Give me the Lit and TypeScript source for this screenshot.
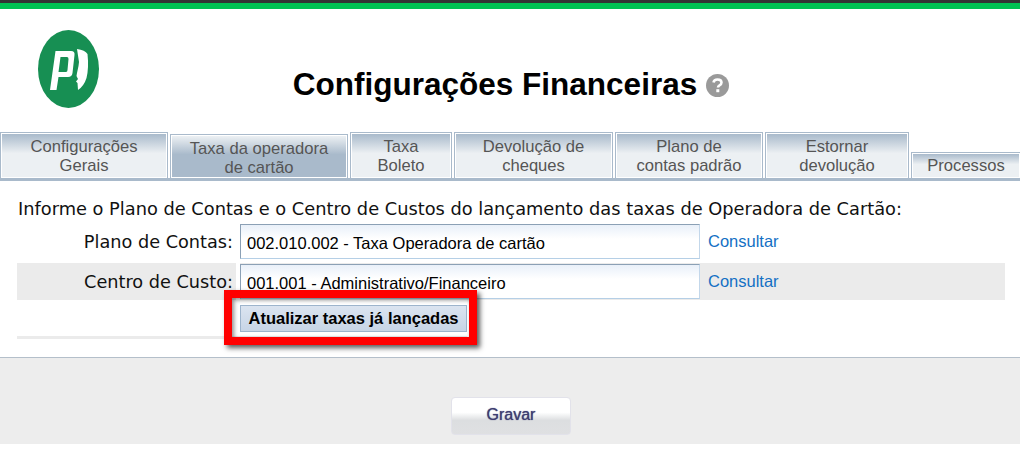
import { LitElement, html, css } from "lit";
import { customElement } from "lit/decorators.js";

const TABS = [
  { label: ["Configurações", "Gerais"], w: 168 },
  { label: ["Taxa da operadora", "de cartão"], w: 178, active: true },
  { label: ["Taxa", "Boleto"], w: 102 },
  { label: ["Devolução de", "cheques"], w: 159 },
  { label: ["Plano de", "contas padrão"], w: 148 },
  { label: ["Estornar", "devolução"], w: 144 },
  { label: ["Processos"], w: 110, short: true },
];

@customElement("app-root")
export class AppRoot extends LitElement {
  static styles = css`
    :host { display: block; width: 1020px; height: 451px; background: #fff; overflow: hidden; font-family: "Liberation Sans", Arial, sans-serif; }
    .top { height: 3px; background: #333; }
    .green { height: 6px; background: #00c152; }
    .header { height: 123px; display: grid; grid-template-columns: 1fr auto 1fr; align-items: start; }
    .logo { margin: 21px 0 0 38px; display: block; }
    .title { display: flex; align-items: center; gap: 9px; margin-top: 57px; padding-left: 2px; }
    h1 { margin: 0; font-size: 31.5px; line-height: 36px; font-weight: 700; color: #000; }
    .help { display: block; margin-top: 2px; }
    .tabs { display: flex; align-items: flex-end; gap: 2px; height: 46px; border-bottom: 3px solid #a9bacb; overflow: hidden; }
    .tab { flex: none; box-sizing: border-box; height: 46px; border: 1px solid #a9bacb; border-bottom: none; padding: 1px; text-align: center; }
    .tab-in { height: 100%; box-sizing: border-box; background: linear-gradient(#a9bacb 0, #ecf0f3 45%, #ecf0f3 100%); color: #555; font-size: 16.6px; line-height: 19px; padding-top: 3px; }
    .tab.active { height: 44px; }
    .tab.active .tab-in { background: linear-gradient(#ecf0f3 0, #a9bacb 45%, #a9bacb 100%); padding-top: 3px; }
    .tab.short { height: 26px; }
    .tab.short .tab-in { padding-top: 2px; }
    .form { margin: 0 15px 0 17px; padding-top: 14px; }
    .intro { font-family: "DejaVu Sans", sans-serif; font-size: 17.8px; line-height: 28px; color: #111; height: 29px; margin-left: 1px; white-space: nowrap; }
    .row { display: grid; grid-template-columns: 219px 460px 1fr; align-items: start; height: 36px; margin-bottom: 3px; column-gap: 4px; }
    .row.alt { height: 37px; padding-top: 1px; box-sizing: border-box; margin-bottom: 4px; background: linear-gradient(to right, #ebebeb 219px, #fff 219px, #fff 223px, #ebebeb 223px); }
    .row label { text-align: right; font-family: "DejaVu Sans", sans-serif; font-size: 17.7px; line-height: 36px; color: #111; padding-right: 3px; white-space: nowrap; }
    .input { box-sizing: border-box; height: 35px; border: 1px solid #8ba0b5; border-bottom-color: #b5cfe6; border-right-color: #c3d7ea; background: linear-gradient(#e9f0f9 0, #fff 14px); padding: 8px 0 0 6px; font-size: 16.5px; line-height: 20px; color: #000; white-space: nowrap; }
    .link { color: #1470c4; font-size: 16.5px; line-height: 35px; margin-left: 4px; }
    .action { display: flex; padding-left: 223px; height: 35px; border-bottom: 3px solid #ebebeb; width: 450px; box-sizing: border-box; }
    .btn-wrap { position: relative; height: 27px; margin-top: 1px; }
    .frame { position: absolute; left: -16px; top: -15px; width: 253px; height: 55px; box-sizing: border-box; border: 8px solid #f00; box-shadow: 3px 3px 5px rgba(0,0,0,.65), inset 2px 2px 4px rgba(0,0,0,.45); pointer-events: none; }
    .btn { box-sizing: border-box; width: 227px; height: 27px; display: flex; align-items: center; justify-content: center; background: linear-gradient(#dbe4f0, #c7d5e6); border: 1px solid #9db4cc; font-size: 16.5px; font-weight: 700; color: #000; white-space: nowrap; }
    .footer { margin-top: 18px; height: 87px; box-sizing: border-box; border-top: 1px solid #b4bfca; background: #ededed; display: flex; justify-content: center; padding: 39px 0 0 2px; }
    .save { box-sizing: border-box; width: 120px; height: 38px; padding-bottom: 2px; border: 1px solid #e2e2ea; border-radius: 4px; background: linear-gradient(#fff 0, #fff 40%, #dcdee0 62%, #dfe0e2 100%); color: #3e3e72; font-size: 16px; text-shadow: 0 0 1px #3e3e72; display: flex; align-items: center; justify-content: center; }
  `;

  render() {
    return html`
      <div class="top"></div>
      <div class="green"></div>
      <div class="header">
        <svg class="logo" width="61" height="79" viewBox="0 0 61 79">
          <ellipse cx="30.5" cy="39" rx="30.5" ry="39" fill="#178f53"/>
          <path fill="#fff" fill-rule="evenodd" d="M17.5 21 H33 Q37 21 36.5 25 L34.5 43 Q34 47 30 47 H20.5 L18.5 60 H12 Z M22.5 27 L20.5 42 H28 Q29.5 42 29.5 40 L30.5 29 Q30.5 27 29 27 Z"/>
          <path fill="#fff" d="M39 19 Q47 20 49.5 24 Q51 38 48.5 48 Q46 56 40 60 L39.5 53 L38 51.5 L40 49 L38.5 46 L39 43 L40.5 36 L41 32 Z"/>
        </svg>
        <div class="title">
          <h1>Configurações Financeiras</h1>
          <svg class="help" width="23" height="23" viewBox="0 0 23 23">
            <circle cx="11.5" cy="11.5" r="11.5" fill="#9a9a9a"/>
            <path d="M7.5 8.5 Q8 5.5 11.5 5.5 Q15.5 5.5 15.5 8.6 Q15.5 10.4 13.5 11.4 Q12 12.2 12 13.6" fill="none" stroke="#fff" stroke-width="2.6"/>
            <rect x="10.3" y="15.2" width="3" height="3" fill="#fff"/>
          </svg>
        </div>
        <div></div>
      </div>
      <div class="tabs">
        ${TABS.map((t) => html`
          <div class="tab ${t.active ? "active" : ""} ${t.short ? "short" : ""}" style="width:${t.w}px">
            <div class="tab-in">${t.label.map((l) => html`<div>${l}</div>`)}</div>
          </div>`)}
      </div>
      <div class="form">
        <div class="intro">Informe o Plano de Contas e o Centro de Custos do lançamento das taxas de Operadora de Cartão:</div>
        <div class="row">
          <label>Plano de Contas:</label>
          <div class="input">002.010.002 - Taxa Operadora de cartão</div>
          <span class="link">Consultar</span>
        </div>
        <div class="row alt">
          <label>Centro de Custo:</label>
          <div class="input">001.001 - Administrativo/Financeiro</div>
          <span class="link">Consultar</span>
        </div>
        <div class="action">
          <div class="btn-wrap">
            <div class="btn">Atualizar taxas já lançadas</div>
            <div class="frame"></div>
          </div>
        </div>
      </div>
      <div class="footer"><div class="save">Gravar</div></div>
    `;
  }
}
